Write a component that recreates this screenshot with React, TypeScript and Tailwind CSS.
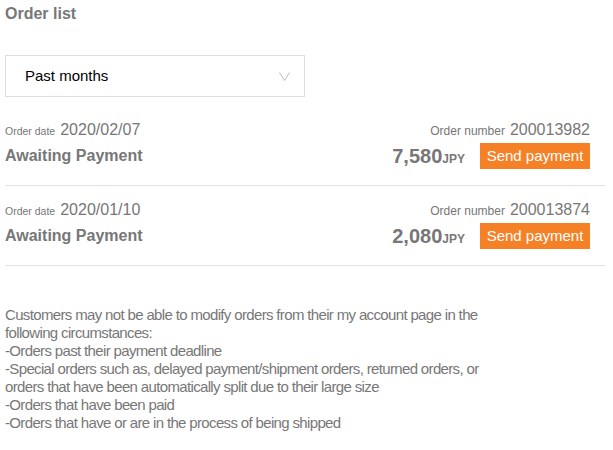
const orders = [
  { date: "2020/02/07", number: "200013982", price: "7,580" },
  { date: "2020/01/10", number: "200013874", price: "2,080" },
];

const notes = [
  "-Orders past their payment deadline",
  "-Special orders such as, delayed payment/shipment orders, returned orders, or orders that have been automatically split due to their large size",
  "-Orders that have been paid",
  "-Orders that have or are in the process of being shipped",
];

export default function App() {
  return (
    <div className="w-[613px] h-[450px] bg-white pl-[5px] pr-[8px] text-[#777] font-['Liberation_Sans',Arial,sans-serif]">
      {/* Title */}
      <h1 className="pt-[5px] text-[16px] leading-[18px] font-bold">Order list</h1>

      {/* Period select */}
      <div className="mt-[32px] w-[300px] h-[42px] border border-[#ddd] flex items-center justify-between pl-[19px] pr-[14px]">
        <span className="text-[15px] text-black">Past months</span>
        <svg width="11" height="9" viewBox="0 0 11 9" className="text-[#bbb]">
          <path d="M0.5 0.5 L5.5 8.5 L10.5 0.5" fill="none" stroke="currentColor" strokeWidth="1" />
        </svg>
      </div>

      {/* Orders */}
      <div className="mt-[9px]">
        {orders.map((o) => (
          <div key={o.number} className="flex justify-between border-b border-[#e3e3e3] pt-[15px] pb-[16px] pr-[15px]">
            <div>
              <p className="h-[18px] leading-[18px] flex items-baseline gap-[5px]">
                <span className="text-[10.5px]">Order date</span>
                <span className="text-[16px]">{o.date}</span>
              </p>
              <p className="mt-[8px] text-[16px] leading-[18px] font-bold">Awaiting Payment</p>
            </div>
            <div className="flex flex-col items-end">
              <p className="h-[18px] leading-[18px] flex items-baseline gap-[5px]">
                <span className="text-[12px]">Order number</span>
                <span className="text-[16px]">{o.number}</span>
              </p>
              <div className="mt-[4px] h-[26px] flex items-center gap-[15px]">
                <p className="font-bold leading-none flex items-baseline">
                  <span className="text-[20px]">{o.price}</span>
                  <span className="text-[12px]">JPY</span>
                </p>
                <button className="w-[110px] h-[26px] bg-[#f58025] text-white text-[15px] leading-[26px]">Send payment</button>
              </div>
            </div>
          </div>
        ))}
      </div>

      {/* Notice */}
      <div className="mt-[40px] max-w-[500px] text-[15px] leading-[18px] tracking-[-0.65px]">
        <p>Customers may not be able to modify orders from their my account page in the following circumstances:</p>
        {notes.map((n) => (
          <p key={n}>{n}</p>
        ))}
      </div>
    </div>
  );
}
